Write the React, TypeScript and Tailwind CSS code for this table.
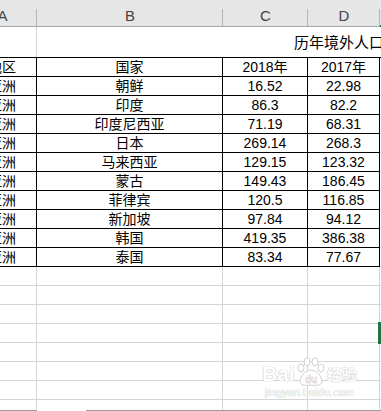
import React from 'react';

const rows = [
  { name: '朝鲜', y18: '16.52', y17: '22.98' },
  { name: '印度', y18: '86.3', y17: '82.2' },
  { name: '印度尼西亚', y18: '71.19', y17: '68.31' },
  { name: '日本', y18: '269.14', y17: '268.3' },
  { name: '马来西亚', y18: '129.15', y17: '123.32' },
  { name: '蒙古', y18: '149.43', y17: '186.45' },
  { name: '菲律宾', y18: '120.5', y17: '116.85' },
  { name: '新加坡', y18: '97.84', y17: '94.12' },
  { name: '韩国', y18: '419.35', y17: '386.38' },
  { name: '泰国', y18: '83.34', y17: '77.67' },
];

const cjk = "font-['Liberation_Sans','Noto_Sans_CJK_SC',sans-serif]";

const HeadCell: React.FC<{ label: string; w: string; last?: boolean }> = ({ label, w, last }) => (
  <div
    className={`relative flex h-[27px] items-end justify-center pb-[1px] ${w} ${
      last ? 'border-b-2 border-[#217346]' : 'border-b border-[#a6a6a6]'
    }`}
  >
    <span className="text-[15px] leading-[18px] text-[#444]">{label}</span>
    {!last && <span className="absolute right-0 top-[9px] bottom-0 w-px bg-[#b4b4b4]" />}
  </div>
);

const DataRow: React.FC<{ a: string; b: string; c: string; d: string }> = ({ a, b, c, d }) => (
  <div className="flex h-[19px] text-[14px] leading-[18px] text-black">
    <div className="w-[69px] shrink-0 border-r border-b border-black text-center">{a}</div>
    <div className="w-[186px] shrink-0 border-r border-b border-black text-center">{b}</div>
    <div className="w-[85px] shrink-0 border-r border-b border-black text-center">{c}</div>
    <div className="w-[72px] shrink-0 border-r border-b border-black text-center">{d}</div>
    <div className="flex-1 border-b border-[#d4d4d4]" />
  </div>
);

const GridRow: React.FC<{ selected?: boolean }> = ({ selected }) => (
  <div className="flex h-[19px]">
    <div className="w-[69px] shrink-0 border-r border-b border-[#d4d4d4]" />
    <div className="w-[186px] shrink-0 border-r border-b border-[#d4d4d4]" />
    <div className="w-[85px] shrink-0 border-r border-b border-[#d4d4d4]" />
    <div className="w-[72px] shrink-0 border-r border-b border-[#d4d4d4]" />
    <div className="relative flex-1 border-b border-[#d4d4d4]">
      {selected && (
        <span className="absolute -left-[2px] -top-[2px] h-[22px] w-[40px] border-[3px] border-[#217346]" />
      )}
    </div>
  </div>
);

const Watermark: React.FC = () => (
  <div className="pointer-events-none absolute left-[262px] top-[357px] flex flex-col items-center">
    <div className="flex items-end">
      <span className="text-[21px] font-bold leading-[22px] text-white [text-shadow:0_0_1px_#bdbdbd,0_0_1px_#bdbdbd]">
        Bai
      </span>
      <svg width="32" height="30" viewBox="0 0 32 30" className="-mb-[2px]">
        <g fill="#fff" stroke="#cfcfcf" strokeWidth="1">
          <ellipse cx="6" cy="11" rx="3" ry="4" />
          <ellipse cx="12" cy="5" rx="3" ry="4" />
          <ellipse cx="20" cy="5" rx="3" ry="4" />
          <ellipse cx="26" cy="11" rx="3" ry="4" />
          <path d="M16 13 C10 13 5 20 5 24 C5 28 9 29 16 28 C23 29 27 28 27 24 C27 20 22 13 16 13 Z" />
        </g>
        <text x="16" y="26" textAnchor="middle" fontSize="10" fontWeight="700" fill="#fff" stroke="#cfcfcf" strokeWidth="0.6" fontFamily="Liberation Sans, sans-serif">
          du
        </text>
      </svg>
      <span className={`text-[15px] font-bold leading-[20px] text-white [text-shadow:0_0_1px_#bdbdbd,0_0_1px_#bdbdbd] ${cjk}`}>
        经验
      </span>
    </div>
    <span className="mt-[1px] text-[11px] leading-[12px] text-white [text-shadow:0_0_1px_#c4c4c4,0_0_1px_#c4c4c4]">
      jingyan.baidu.com
    </span>
  </div>
);

export default function App() {
  return (
    <div className={`relative h-[411px] w-[381px] overflow-hidden bg-white ${cjk}`}>
      <div className="ml-[-32px] w-[440px]">
        {/* column headers */}
        <div className="flex bg-[#e6e6e6]">
          <HeadCell label="A" w="w-[69px] shrink-0" />
          <HeadCell label="B" w="w-[186px] shrink-0" />
          <HeadCell label="C" w="w-[85px] shrink-0" />
          <HeadCell label="D" w="w-[72px] shrink-0" />
          <HeadCell label="E" w="flex-1" last />
        </div>

        {/* title row */}
        <div className="flex h-[30px]">
          <div className="w-[69px] shrink-0 border-r border-[#d4d4d4]" />
          <div className="flex flex-1 items-center pl-[257px] pt-[2px] text-[15px] whitespace-nowrap text-black">
            历年境外人口数量
          </div>
        </div>

        {/* table */}
        <div className="border-t border-black">
          <DataRow a="地区" b="国家" c="2018年" d="2017年" />
          {rows.map((r) => (
            <DataRow key={r.name} a="亚洲" b={r.name} c={r.y18} d={r.y17} />
          ))}
        </div>

        {/* empty grid */}
        <GridRow />
        <GridRow />
        <GridRow />
        <GridRow selected />
        <GridRow />
        <GridRow />
        <GridRow />
        <div className="flex h-[10px]">
          <div className="w-[69px] shrink-0 border-r border-[#d4d4d4]" />
          <div className="w-[186px] shrink-0 border-r border-[#d4d4d4]" />
          <div className="w-[85px] shrink-0 border-r border-[#d4d4d4]" />
          <div className="w-[72px] shrink-0 border-r border-[#d4d4d4]" />
          <div className="flex-1" />
        </div>
        <div className="flex h-px">
          <div className="w-[69px] shrink-0 bg-[#9c9c9c]" />
          <div className="w-[49px] shrink-0" />
          <div className="flex-1 bg-[#9c9c9c]" />
        </div>
      </div>
      <Watermark />
    </div>
  );
}
